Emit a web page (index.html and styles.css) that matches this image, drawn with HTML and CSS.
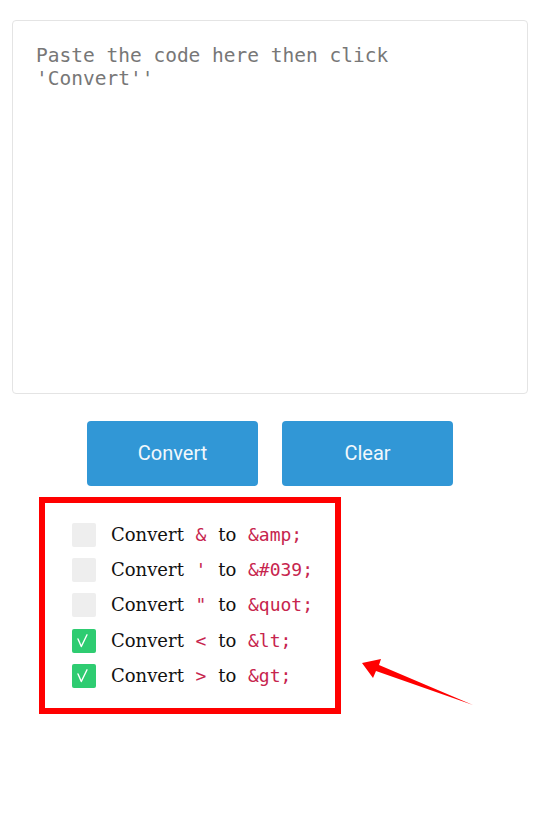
FILE: index.html
```html
<!DOCTYPE html>
<html>
<head>
<meta charset="utf-8">
<link rel="stylesheet" href="styles.css">
</head>
<body>
<div class="page">
  <textarea class="source" placeholder="Paste the code here then click 'Convert''"></textarea>
  <div class="actions">
    <button class="btn">Convert</button>
    <button class="btn">Clear</button>
  </div>
  <div class="options">
    <div class="opt"><span class="box"></span><span class="label">Convert <code>&amp;</code> to <code>&amp;amp;</code></span></div>
    <div class="opt"><span class="box"></span><span class="label">Convert <code>'</code> to <code>&amp;#039;</code></span></div>
    <div class="opt"><span class="box"></span><span class="label">Convert <code>"</code> to <code>&amp;quot;</code></span></div>
    <div class="opt"><span class="box on"><svg width="24" height="24" viewBox="0 0 24 24"><polyline points="6,10 9.3,17.5 15,5.8" fill="none" stroke="#fff" stroke-width="1.4" stroke-linecap="round" stroke-linejoin="round"/></svg></span><span class="label">Convert <code>&lt;</code> to <code>&amp;lt;</code></span></div>
    <div class="opt"><span class="box on"><svg width="24" height="24" viewBox="0 0 24 24"><polyline points="6,10 9.3,17.5 15,5.8" fill="none" stroke="#fff" stroke-width="1.4" stroke-linecap="round" stroke-linejoin="round"/></svg></span><span class="label">Convert <code>&gt;</code> to <code>&amp;gt;</code></span></div>
  </div>
  <svg class="arrow" width="130" height="70" viewBox="350 650 130 70">
    <polygon points="362,663 381,659 379,665 473,705 376,671 373,678" fill="#ff0000"/>
  </svg>
</div>
</body>
</html>
```
FILE: styles.css
```css
html, body {
  margin: 0;
  padding: 0;
  background: #fff;
}
.page {
  position: relative;
  padding: 20px 12px;
  width: 540px;
  height: 813px;
  box-sizing: border-box;
}
.source {
  display: block;
  width: 516px;
  height: 374px;
  box-sizing: border-box;
  border: 1px solid #e4e4e4;
  border-radius: 4px;
  padding: 23px 23px;
  font-family: "DejaVu Sans Mono", monospace;
  font-size: 19.5px;
  line-height: 23px;
  resize: none;
  outline: none;
  margin: 0;
}
.source::placeholder {
  color: #777;
}
.actions {
  display: flex;
  justify-content: center;
  gap: 24px;
  margin-top: 27px;
}
.btn {
  width: 171px;
  height: 65px;
  border: none;
  border-radius: 4px;
  background: #3197d6;
  color: #f2f8fc;
  font-family: Roboto, sans-serif;
  font-size: 20px;
  line-height: 1;
  padding: 0 0 2px;
}
.options {
  margin-top: 11px;
  margin-left: 27px;
  width: 302px;
  height: 217px;
  box-sizing: border-box;
  border: 6px solid #ff0000;
  padding: 20px 0 0 27px;
  display: flex;
  flex-direction: column;
  gap: 11.2px;
}
.opt {
  display: flex;
  align-items: center;
  height: 24px;
}
.box {
  width: 24px;
  height: 24px;
  border-radius: 2px;
  background: #eeeeee;
  flex: none;
  display: block;
}
.box svg {
  display: block;
}
.box.on {
  background: #2ecc71;
}
.label {
  margin-left: 15px;
  font-family: "DejaVu Serif", serif;
  font-size: 18px;
  color: #111;
  white-space: nowrap;
  word-spacing: 2px;
  margin-top: -1px;
}
code {
  font-family: "DejaVu Sans Mono", monospace;
  font-size: 18px;
  color: #c7254e;
  padding: 0 4px;
  word-spacing: 0;
}
.arrow {
  position: absolute;
  left: 350px;
  top: 650px;
}
```
